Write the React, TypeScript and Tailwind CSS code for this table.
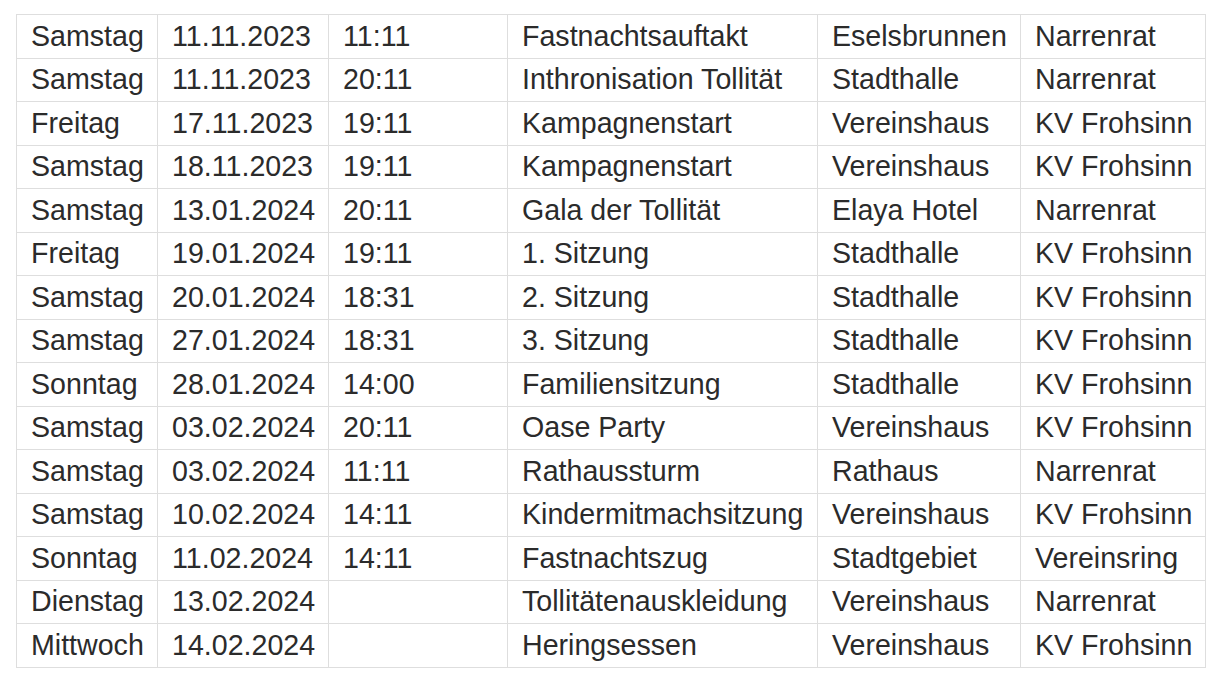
const ROWS: [string, string, string, string, string, string][] = [
  ["Samstag", "11.11.2023", "11:11", "Fastnachtsauftakt", "Eselsbrunnen", "Narrenrat"],
  ["Samstag", "11.11.2023", "20:11", "Inthronisation Tollität", "Stadthalle", "Narrenrat"],
  ["Freitag", "17.11.2023", "19:11", "Kampagnenstart", "Vereinshaus", "KV Frohsinn"],
  ["Samstag", "18.11.2023", "19:11", "Kampagnenstart", "Vereinshaus", "KV Frohsinn"],
  ["Samstag", "13.01.2024", "20:11", "Gala der Tollität", "Elaya Hotel", "Narrenrat"],
  ["Freitag", "19.01.2024", "19:11", "1. Sitzung", "Stadthalle", "KV Frohsinn"],
  ["Samstag", "20.01.2024", "18:31", "2. Sitzung", "Stadthalle", "KV Frohsinn"],
  ["Samstag", "27.01.2024", "18:31", "3. Sitzung", "Stadthalle", "KV Frohsinn"],
  ["Sonntag", "28.01.2024", "14:00", "Familiensitzung", "Stadthalle", "KV Frohsinn"],
  ["Samstag", "03.02.2024", "20:11", "Oase Party", "Vereinshaus", "KV Frohsinn"],
  ["Samstag", "03.02.2024", "11:11", "Rathaussturm", "Rathaus", "Narrenrat"],
  ["Samstag", "10.02.2024", "14:11", "Kindermitmachsitzung", "Vereinshaus", "KV Frohsinn"],
  ["Sonntag", "11.02.2024", "14:11", "Fastnachtszug", "Stadtgebiet", "Vereinsring"],
  ["Dienstag", "13.02.2024", "", "Tollitätenauskleidung", "Vereinshaus", "Narrenrat"],
  ["Mittwoch", "14.02.2024", "", "Heringsessen", "Vereinshaus", "KV Frohsinn"],
];

const COL_WIDTHS = ["w-[141px]", "w-[171px]", "w-[179px]", "w-[310px]", "w-[203px]", "w-[185px]"];

export default function App() {
  return (
    <div className="min-h-screen bg-white pt-[14px] pl-[16px] font-['Liberation_Sans',Arial,sans-serif]">
      <table className="table-fixed border-collapse text-[28.6px] leading-none text-[#2b2b2b]">
        <colgroup>
          {COL_WIDTHS.map((w, i) => (
            <col key={i} className={w} />
          ))}
        </colgroup>
        <tbody>
          {ROWS.map((row, ri) => (
            <tr key={ri} className="h-[43.5px]">
              {row.map((cell, ci) => (
                <td key={ci} className="border-[1.5px] border-[#dedede] pl-[14px] pr-1 align-middle whitespace-nowrap">
                  {cell}
                </td>
              ))}
            </tr>
          ))}
        </tbody>
      </table>
    </div>
  );
}
